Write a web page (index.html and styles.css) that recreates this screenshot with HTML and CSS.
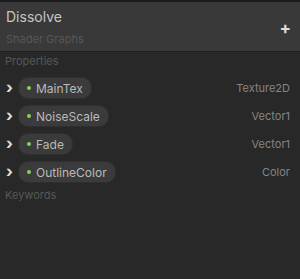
FILE: index.html
```html
<!DOCTYPE html>
<html lang="en">
<head>
    <meta charset="UTF-8">
    <title>Dissolve</title>
    <link rel="stylesheet" href="styles.css">
</head>
<body>
    <div class="panel">
        <div class="header">
            <div class="titles">
                <div class="title">Dissolve</div>
                <div class="subtitle">Shader Graphs</div>
            </div>
            <div class="add">+</div>
        </div>
        <div class="section">Properties</div>
        <div class="row">
            <span class="arrow">&#x203A;</span>
            <span class="pill"><i class="dot"></i>MainTex</span>
            <span class="type">Texture2D</span>
        </div>
        <div class="row">
            <span class="arrow">&#x203A;</span>
            <span class="pill"><i class="dot"></i>NoiseScale</span>
            <span class="type">Vector1</span>
        </div>
        <div class="row">
            <span class="arrow">&#x203A;</span>
            <span class="pill"><i class="dot"></i>Fade</span>
            <span class="type">Vector1</span>
        </div>
        <div class="row">
            <span class="arrow">&#x203A;</span>
            <span class="pill"><i class="dot"></i>OutlineColor</span>
            <span class="type">Color</span>
        </div>
        <div class="section">Keywords</div>
    </div>
</body>
</html>
```

FILE: styles.css
```css
body {
    margin: 0;
    background-color: #282828;
    font-family: Inter, "Noto Sans", sans-serif;
}
.panel {
    width: 300px;
    height: 279px;
    background-color: #282828;
    border-top: 2px solid #1c1c1c;
    box-sizing: border-box;
}
.header {
    display: flex;
    align-items: center;
    justify-content: space-between;
    background-color: #393939;
    height: 50px;
    padding: 0 9px 0 6px;
    border-bottom: 1px solid #1f1f1f;
    box-sizing: border-box;
}
.title {
    color: #c6c6c6;
    font-size: 14px;
    line-height: 18px;
}
.subtitle {
    color: #575757;
    font-size: 11px;
    line-height: 14px;
    margin-top: 6px;
}
.add {
    color: #dcdcdc;
    font-size: 17px;
    font-weight: bold;
    margin-top: 2px;
}
.section {
    color: #575757;
    font-size: 11px;
    line-height: 14px;
    padding: 2px 5px 6px;
}
.row {
    display: flex;
    align-items: center;
    height: 28px;
    padding: 0 10px 0 6px;
}
.arrow {
    color: #e0e0e0;
    font-size: 16px;
    font-weight: bold;
    width: 12px;
    line-height: 16px;
    margin-bottom: 2px;
}
.pill {
    display: flex;
    align-items: center;
    height: 20px;
    padding: 0 8px 0 8px;
    border-radius: 10px;
    background-color: #3b3b3b;
    border: 1px solid #2f2f2f;
    color: #bababa;
    font-size: 12px;
}
.dot {
    width: 4px;
    height: 4px;
    border-radius: 50%;
    background-color: #7fd65a;
    margin-right: 5px;
}
.type {
    margin-left: auto;
    color: #858585;
    font-size: 11px;
}
```
